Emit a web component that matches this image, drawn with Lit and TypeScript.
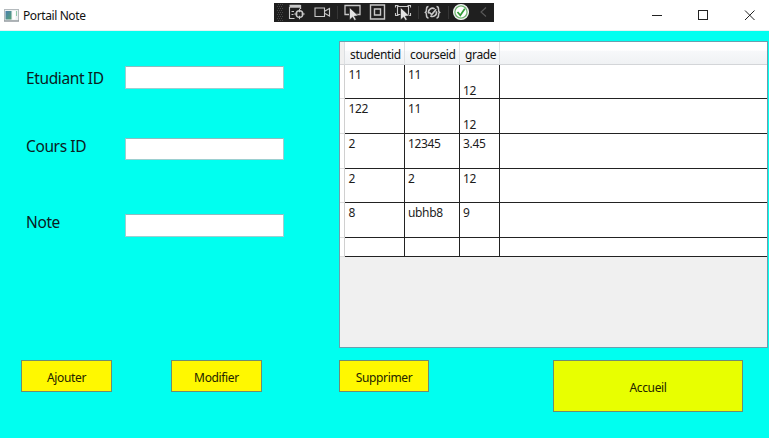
import { LitElement, html, css, svg } from "lit";
import { customElement, property } from "lit/decorators.js";

@customElement("debug-toolbar")
class DebugToolbar extends LitElement {
  static styles = css`
    :host { display: block; width: 220px; height: 19px; background: #1f1f1f; }
    svg { display: block; }
  `;
  render() {
    const grip: unknown[] = [];
    for (let y = 1; y < 18; y += 2)
      for (let x = 0; x < 3; x++)
        grip.push(svg`<rect x=${4 + x * 2 - (y % 4 === 1 ? 0 : 1)} y=${y} width="1" height="1" fill="#484848" stroke="none"/>`);
    return html`<svg width="220" height="19" viewBox="0 0 220 19" fill="none" stroke="#c8c8c8" stroke-width="1.1">
      ${grip}
      <g>
        <path d="M15.500 2.500h11M15.500 4h11M26.500 2v4" stroke-width="1.300"/>
        <path d="M15.500 4v11.500h5M17.500 8.500h2.500M17.500 11.500h2"/>
        <circle cx="25.500" cy="11" r="3.300" stroke-width="1.500"/>
        <path d="M25.500 5.800v3.400M25.500 12.800v3.400M20.300 11h3.400M27.300 11h3.400"/>
      </g>
      <path d="M41 5h9.500v8.500h-9.500zM51 8l4.500-2.500v7.500l-4.500-2.500"/>
      <path d="M63.500 3v13M144.500 3v13M174.500 3v13" stroke="#363636"/>
      <path d="M75 11.500h-4v-9h15v9h-4" stroke-width="1.300"/>
      <path d="M75.500 4.500v12.500l3-2.800 2 3.300 1.800-1-2-3.200 4-.500z" fill="#e4e4e4" stroke="#1f1f1f" stroke-width=".6"/>
      <path d="M96.500 2h14v14h-14zM100.500 6h6v6h-6z" stroke-width="1.400"/>
      <path d="M123.500 3.500h11v8h-11zM121.500 4.500v-2h3M136.500 4.500v-2h-3M121.500 10v2.500h3M136.500 10v2.500h-3"/>
      <path d="M126.500 4.500v12.500l3-2.800 2 3.300 1.800-1-2-3.200 4-.500z" fill="#e4e4e4" stroke="#1f1f1f" stroke-width=".6"/>
      <path d="M154.500 3.500c-1.800 0-2 1-2 2.500 0 2-.2 2.800-1 3.300.8.500 1 1.500 1 3.300 0 1.500.2 2.400 2 2.400M162.500 3.500c1.800 0 2 1 2 2.500 0 2 .2 2.800 1 3.300-.8.500-1 1.500-1 3.300 0 1.500-.2 2.400-2 2.400" stroke-width="1.500"/>
      <path d="M154.700 10.500a4 4 0 0 1 6-4.600M162.300 8.200a4 4 0 0 1-6 4.600M155.500 9.500l2.200 2 4.500-5.200" stroke-width="1.600"/>
      <circle cx="187" cy="9" r="7.500" fill="#fff" stroke="#f0f0f0"/>
      <circle cx="187" cy="9" r="6.100" stroke="#6fb471" stroke-width="1.300"/>
      <path d="M183.500 9l2.800 3.300 4.500-6.600" stroke="#319b36" stroke-width="1.700"/>
      <path d="M212 4.500l-5 4.500 5 4.500" stroke="#5a5a5a"/>
    </svg>`;
  }
}

@customElement("title-bar")
class TitleBar extends LitElement {
  @property() caption = "";
  static styles = css`
    :host { display: flex; position: relative; height: 31px; box-sizing: border-box; background: #fff; border-bottom: 1px solid #e3f4f4; font: 12px/30px "Noto Sans", "Open Sans", sans-serif; letter-spacing: -0.4px; color: #111; align-items: center; padding-left: 4px; }
    .icon { margin-right: 4px; display: block; }
    .caption { flex: 1; height: 30px; margin-top: 2px; }
    .controls { display: block; margin-right: 13px; }
    debug-toolbar { position: absolute; left: 274px; top: 3px; }
  `;
  render() {
    return html`
      <svg class="icon" width="15" height="13" viewBox="0 0 15 13">
        <rect x=".5" y=".5" width="14" height="11.500" fill="#eef1f3" stroke="#b4babd"/>
        <path d="M0 12h15" stroke="#858c91"/>
        <defs><linearGradient id="g" x2="1" y2="1"><stop stop-color="#4b7fae"/><stop offset="1" stop-color="#55a277"/></linearGradient></defs>
        <rect x="1.500" y="2" width="6" height="8.500" fill="url(#g)"/>
        <rect x="8.500" y="2" width="3" height="8.500" fill="#fff"/>
        <path d="M12.500 2v5" stroke="#8fc9aa"/>
      </svg>
      <span class="caption">${this.caption}</span>
      <svg class="controls" width="106" height="12" viewBox="0 0 106 12" fill="none" stroke="#222" stroke-width="1">
        <path d="M2 6.500h10"/><rect x="48.500" y="1.500" width="9" height="9"/>
        <path d="M95 1.500l9.500 9.500M104.500 1.500l-9.500 9.500"/>
      </svg>
      <debug-toolbar></debug-toolbar>`;
  }
}

@customElement("grade-grid")
class GradeGrid extends LitElement {
  rows = [
    { cells: ["11", "11", "12"], low: true },
    { cells: ["122", "11", "12"], low: true },
    { cells: ["2", "12345", "3.45"], low: false },
    { cells: ["2", "2", "12"], low: false },
    { cells: ["8", "ubhb8", "9"], low: false },
    { cells: ["", "", ""], low: false },
  ];
  static styles = css`
    :host { display: block; box-sizing: border-box; width: 429px; height: 307px; border: 1px solid #6b9fae; background: #f0f0f0; font: 12px/15px "Noto Sans", "Open Sans", sans-serif; letter-spacing: -0.35px; color: #1c1c1c; }
    .grid { display: grid; grid-template-columns: 5px 60px 55px 40px 1fr; grid-template-rows: 23px 34px 35px 35px 34px 35px 19px; }
    .head { background: linear-gradient(#fff 0 38%, #f7f8fa 40%, #f0f2f4); border-right: 1px solid #dcdfe2; border-bottom: 1px solid #d3d5d8; padding: 5px 0 0 5px; color: #111; letter-spacing: -0.35px; }
    .head.corner { background: #f0f0f0; padding: 0; }
    .head.last { border-right: 0; }
    .rowhead { background: #fff; border-right: 1px solid #d0d0d0; border-bottom: 1px solid #dcdcdc; }
    .cell { background: #fff; border-right: 1px solid #222; border-bottom: 1px solid #222; padding: 2px 0 0 3.500px; }
    .cell.c1 { padding-left: 3px; }
    .cell.c2 { padding-left: 3px; }
    .cell.low { padding-top: 18px; }
    .cell.last { border-right: 0; }
    .head, .rowhead, .cell { box-sizing: border-box; min-width: 0; min-height: 0; }
  `;
  render() {
    return html`<div class="grid">
      <div class="head corner"></div>
      ${["studentid", "courseid", "grade"].map((h) => html`<div class="head">${h}</div>`)}
      <div class="head last"></div>
      ${this.rows.map((r) => html`<div class="rowhead"></div>
        ${r.cells.map((c, i) => html`<div class="cell c${i} ${r.low && i === 2 ? "low" : ""}">${c}</div>`)}
        <div class="cell last"></div>`)}
    </div>`;
  }
}

@customElement("app-root")
class AppRoot extends LitElement {
  static styles = css`
    :host { display: block; width: 769px; height: 438px; overflow: hidden; background: #00fff0; font-family: "Noto Sans", "Open Sans", sans-serif; }
    .main { display: flex; height: 329px; box-sizing: border-box; padding-top: 10px; }
    .form { width: 339px; box-sizing: border-box; padding: 25px 0 0 26px; display: grid; grid-template-columns: 99px 159px; grid-template-rows: 72px 76px 23px; align-items: start; align-content: start; }
    label { font-size: 15.500px; line-height: 24px; letter-spacing: -0.38px; color: #0b2022; white-space: nowrap; }
    .mid { margin-top: -4px; }
    .low { margin-top: -4px; }
    input { box-sizing: border-box; width: 159px; height: 23px; border: 1px solid #9ccfd0; border-top-color: #8dbdc0; background: #fff; padding: 0; margin: 0; border-radius: 0; }
    .short { height: 22px; }
    .actions { display: flex; align-items: flex-start; padding-left: 21px; }
    button { box-sizing: border-box; width: 91px; height: 32px; padding: 4px 0 0; border: 1px solid #6d8d72; border-radius: 0; background: #fff800; font: 12px/16px "Noto Sans", "Open Sans", sans-serif; letter-spacing: -0.35px; color: #242400; }
    .edit { margin-left: 59px; }
    .remove { margin-left: 77px; width: 90px; }
    .home { margin-left: 124px; width: 190px; height: 52px; background: #e8ff00; }
  `;
  render() {
    return html`
      <title-bar caption="Portail Note"></title-bar>
      <div class="main">
        <div class="form">
          <label for="student">Etudiant ID</label><input id="student" />
          <label class="mid" for="course">Cours ID</label><input id="course" class="short" />
          <label class="low" for="grade">Note</label><input id="grade" />
        </div>
        <grade-grid></grade-grid>
      </div>
      <div class="actions">
        <button>Ajouter</button>
        <button class="edit">Modifier</button>
        <button class="remove">Supprimer</button>
        <button class="home">Accueil</button>
      </div>`;
  }
}
